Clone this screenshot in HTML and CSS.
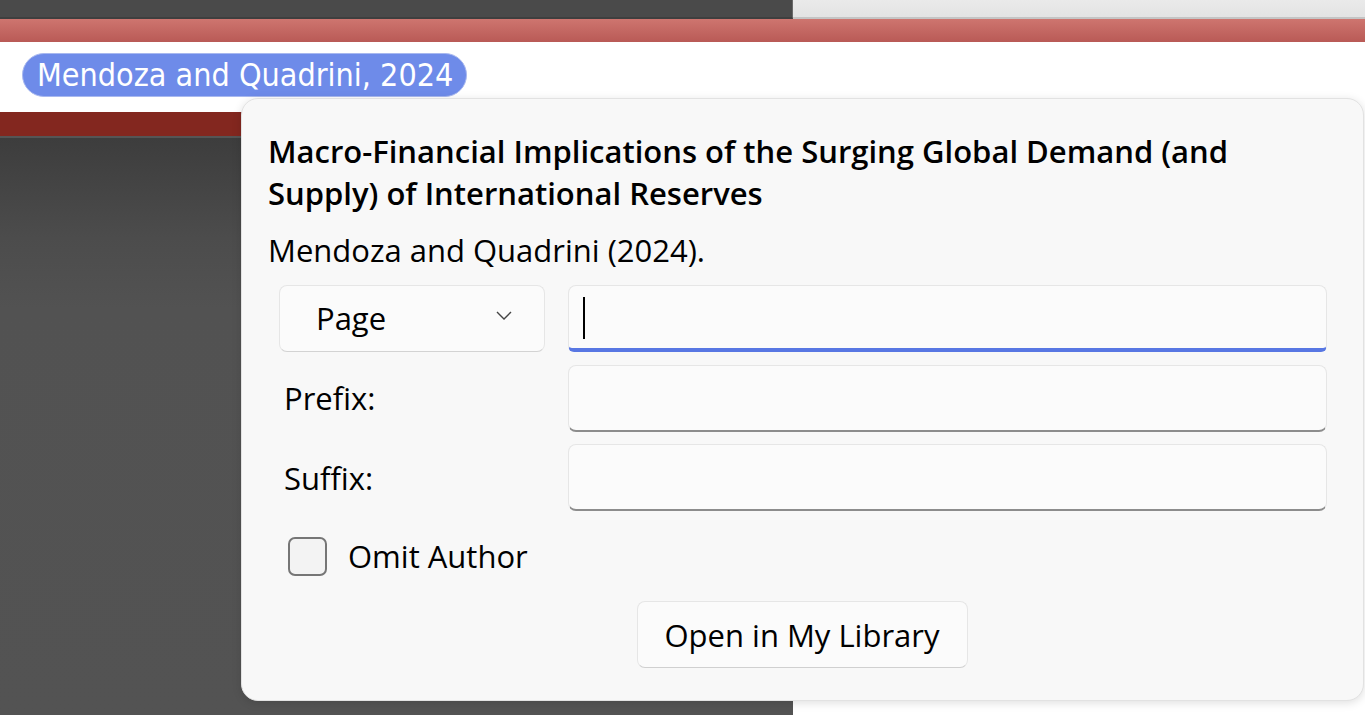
FILE: index.html
```html
<!DOCTYPE html>
<html>
<head>
<meta charset="utf-8">
<link rel="stylesheet" href="styles.css">
</head>
<body>
<div class="app">
  <div class="chrome">
    <div class="chrome-left"></div>
    <div class="chrome-right"></div>
  </div>
  <div class="ribbon"></div>
  <div class="docline">
    <span class="pill">Mendoza and Quadrini, 2024</span>
  </div>
  <div class="lower">
    <div class="lower-left">
      <div class="redbar"></div>
      <div class="darkarea"></div>
    </div>
    <div class="lower-right"></div>
  </div>

  <div class="popup">
    <div class="title">Macro-Financial Implications of the Surging Global Demand (and<br>Supply) of International Reserves</div>
    <div class="author">Mendoza and Quadrini (2024).</div>
    <div class="form">
      <div class="select">
        <span>Page</span>
        <svg class="chev" width="16" height="9" viewBox="0 0 16 9"><path d="M1 1 L8 8 L15 1" fill="none" stroke="#444" stroke-width="1.4"/></svg>
      </div>
      <div class="field focused"><span class="caret"></span></div>
      <div class="label">Prefix:</div>
      <div class="field"></div>
      <div class="label">Suffix:</div>
      <div class="field"></div>
    </div>
    <div class="check-row">
      <span class="checkbox"></span>
      <span class="check-label">Omit Author</span>
    </div>
    <div class="btn-row">
      <div class="btn">Open in My Library</div>
    </div>
  </div>
</div>
</body>
</html>
```

FILE: styles.css
```css
html, body {
  margin: 0;
  padding: 0;
}
body {
  width: 1365px;
  height: 715px;
  overflow: hidden;
  background: #ffffff;
  font-family: "Open Sans", "Noto Sans", sans-serif;
}
.app {
  position: relative;
  width: 1365px;
  height: 715px;
  display: flex;
  flex-direction: column;
}
.chrome {
  display: flex;
  height: 19px;
}
.chrome-left {
  width: 793px;
  background: #4a4a4a;
  border-bottom: 2px solid #3f3f3f;
  border-right: 1px solid #6a6a6a;
  box-sizing: border-box;
}
.chrome-right {
  flex: 1;
  background: linear-gradient(#eaeaea, #e3e3e3);
  border-bottom: 2px solid #c4c4c4;
  box-sizing: border-box;
}
.ribbon {
  height: 23px;
  background: linear-gradient(#ce756f, #b95a56);
}
.docline {
  height: 70px;
  background: #ffffff;
  padding: 11px 0 0 22px;
  box-sizing: border-box;
}
.pill {
  display: inline-flex;
  align-items: center;
  height: 44px;
  width: 445px;
  box-sizing: border-box;
  padding-left: 14px;
  border-radius: 22px;
  background: #6e8be9;
  border: 1.5px solid #a8b8ef;
  color: #ffffff;
  font-family: "DejaVu Sans", sans-serif;
  font-stretch: condensed;
  font-size: 32px;
}
.lower {
  flex: 1;
  display: flex;
}
.lower-left {
  width: 793px;
  display: flex;
  flex-direction: column;
}
.redbar {
  height: 24px;
  background: #83271f;
  border-bottom: 2px solid #555555;
}
.darkarea {
  flex: 1;
  background: linear-gradient(#3d3d3d 0px, #4c4c4c 100px, #525252 170px, #535353 100%);
}
.lower-right {
  flex: 1;
  background: #ffffff;
}

.popup {
  position: absolute;
  left: 241px;
  top: 98px;
  width: 1123px;
  height: 603px;
  box-sizing: border-box;
  background: #f8f8f8;
  border: 1px solid #e2e2e2;
  border-radius: 17px;
  box-shadow: 0 2px 10px rgba(0,0,0,0.13);
  padding: 31px 36px 0 26px;
  color: #000000;
}
.title {
  font-weight: 600;
  font-size: 31px;
  line-height: 42px;
}
.author {
  margin-top: 15px;
  font-size: 31px;
  line-height: 42px;
}
.form {
  margin: 14px 0 0 11px;
  display: grid;
  grid-template-columns: 266px 1fr;
  column-gap: 23px;
  row-gap: 12.5px;
}
.select {
  height: 67px;
  box-sizing: border-box;
  background: #fbfbfb;
  border: 1px solid #e6e6e6;
  border-bottom-color: #d3d3d3;
  border-radius: 8px;
  display: flex;
  align-items: center;
  justify-content: space-between;
  padding: 0 32px 2px 36px;
  font-size: 31px;
}
.chev {
  margin-top: -4px;
}
.field {
  height: 67px;
  box-sizing: border-box;
  background: #fbfbfb;
  border: 1px solid #e6e6e6;
  border-bottom: 2px solid #8c8c8c;
  border-radius: 8px;
  position: relative;
}
.field.focused {
  border-bottom: 4px solid #5877e3;
  border-radius: 8px 8px 6px 6px;
  display: flex;
  align-items: center;
  padding-left: 14px;
}
.caret {
  width: 2px;
  height: 42px;
  background: #000;
  margin-top: 2px;
}
.label {
  height: 67px;
  display: flex;
  align-items: center;
  padding-left: 5px;
  font-size: 31px;
}
.check-row {
  margin: 25px 0 0 20px;
  display: flex;
  align-items: center;
  height: 40px;
}
.checkbox {
  width: 39px;
  height: 39px;
  box-sizing: border-box;
  border: 2px solid #767676;
  border-radius: 7px;
  background: #f3f3f3;
}
.check-label {
  margin-left: 21px;
  font-size: 31px;
}
.btn-row {
  margin-top: 25px;
  display: flex;
  justify-content: center;
  padding-left: 9px;
}
.btn {
  width: 331px;
  height: 67px;
  box-sizing: border-box;
  background: #fbfbfb;
  border: 1px solid #e6e6e6;
  border-bottom-color: #d0d0d0;
  border-radius: 8px;
  display: flex;
  align-items: center;
  justify-content: center;
  font-size: 31px;
}
```
